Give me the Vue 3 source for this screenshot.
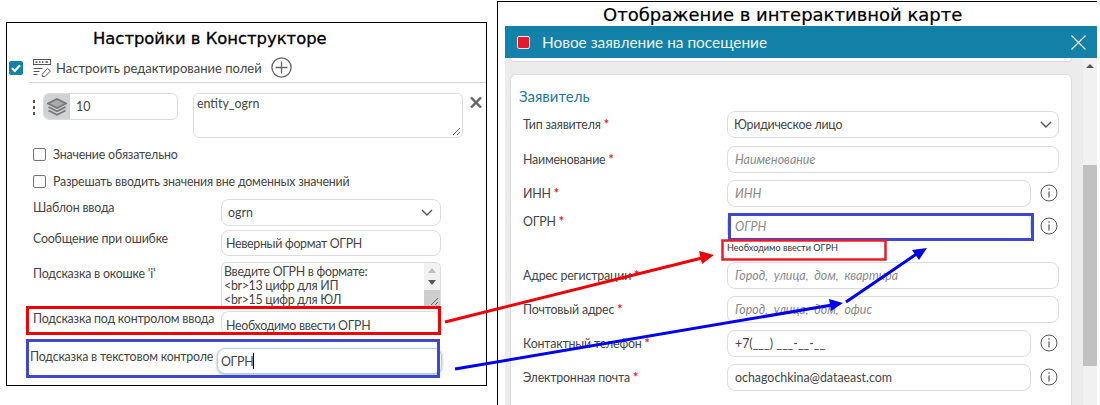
<script setup>
const rightRows = [
  { label: 'Адрес регистрации', ph: 'Город,  улица,  дом,  квартира', cls: 'r-a' },
  { label: 'Почтовый адрес', ph: 'Город,  улица,  дом,  офис', cls: 'r-b' },
]
</script>

<template>
  <div class="page">
    <section class="left">
      <h2 class="left-title">Настройки в Конструкторе</h2>
      <div class="tool-row">
        <span class="big-check">
          <svg width="14" height="14" viewBox="0 0 14 14"><path d="M3 7.2 5.8 10 11 4.2" fill="none" stroke="#fff" stroke-width="2.2" /></svg>
        </span>
        <div class="tool-inner">
          <svg class="tool-icon" width="19" height="18" viewBox="0 0 19 18" fill="none" stroke="#555" stroke-width="1">
            <rect x="0.5" y="0.5" width="17" height="5" />
            <path d="M2.5 3h2M6 3h1.5M9 3h1.5M12.5 3h2.5" stroke-width="1.3" />
            <path d="M0.5 9.5h9M0.5 12.5h6M0.5 15.5h4" />
            <path d="M9 15.5 14.5 9.5 17.5 12 12 17.5H9.5Z" />
          </svg>
          <span class="tool-text">Настроить редактирование полей</span>
          <svg class="plus" width="21" height="21" viewBox="0 0 21 21" fill="none" stroke="#666" stroke-width="1.3">
            <circle cx="10.5" cy="10.5" r="9.6" />
            <path d="M10.5 4.5v12M4.5 10.5h12" />
          </svg>
        </div>
      </div>

      <div class="field-row">
        <span class="dots"><i></i><i></i><i></i></span>
        <div class="num-group">
          <span class="addon">
            <svg width="20" height="18" viewBox="0 0 20 18" fill="none" stroke="#777" stroke-width="1.8">
              <path d="M10 1 19 5.5 10 10 1 5.5Z" fill="#aaa" />
              <path d="M1.5 9 10 13.2 18.5 9" />
              <path d="M1.5 12.5 10 16.7 18.5 12.5" />
            </svg>
          </span>
          <span class="num-val">10</span>
        </div>
        <div class="area-name">
          entity_ogrn
          <svg class="grip" width="9" height="9" viewBox="0 0 9 9" stroke="#666" stroke-width="1"><path d="M1 8 8 1M5 8 8 5" /></svg>
        </div>
        <svg class="close-x" width="12" height="11" viewBox="0 0 12 11" stroke="#666" stroke-width="2.4"><path d="M1 0.5 11 10.5M11 0.5 1 10.5" /></svg>
      </div>

      <label class="check-row first"><span class="box"></span>Значение обязательно</label>
      <label class="check-row"><span class="box"></span>Разрешать вводить значения вне доменных значений</label>

      <div class="l-row l-select">
        <span class="l-label">Шаблон ввода</span>
        <div class="l-ctl sel latin">ogrn
          <svg width="12" height="7" viewBox="0 0 12 7" fill="none" stroke="#555" stroke-width="1.4"><path d="M1 1 6 6 11 1" /></svg>
        </div>
      </div>
      <div class="l-row l-msg">
        <span class="l-label">Сообщение при ошибке</span>
        <div class="l-ctl">Неверный формат ОГРН</div>
      </div>
      <div class="l-row l-tip">
        <span class="l-label tip-label">Подсказка в окошке 'i'</span>
        <div class="tip-area">
          <div class="tip-text">Введите ОГРН в формате:<br />&lt;br&gt;13 цифр для ИП<br />&lt;br&gt;15 цифр для ЮЛ</div>
          <div class="tip-scroll">
            <span class="arr-up"></span>
            <span class="arr-down"></span>
            <span class="tip-track">
              <svg width="9" height="9" viewBox="0 0 9 9" stroke="#666" stroke-width="1"><path d="M1 8 8 1M5 8 8 5" /></svg>
            </span>
          </div>
        </div>
      </div>
      <div class="l-row l-under">
        <span class="l-label under-label">Подсказка под контролом ввода</span>
        <div class="l-ctl under-ctl">Необходимо ввести ОГРН</div>
      </div>
      <div class="l-row l-text">
        <span class="l-label">Подсказка в текстовом контроле</span>
        <div class="l-ctl focus-ctl">ОГРН<span class="caret"></span></div>
      </div>
    </section>

    <section class="right">
      <h2 class="right-title">Отображение в интерактивной карте</h2>
      <header class="win-head">
        <span class="win-mark"></span>
        <span class="win-title">Новое заявление на посещение</span>
        <svg class="win-close" width="15" height="15" viewBox="0 0 15 15" stroke="#eef8fb" stroke-width="1.2"><path d="M0.5 0.5 14.5 14.5M14.5 0.5 0.5 14.5" /></svg>
      </header>
      <div class="win-body">
        <div class="win-scroll">
          <div class="prev-card"></div>
          <div class="card">
            <h3 class="card-title">Заявитель</h3>

            <div class="r-row r-type">
              <span class="r-label">Тип заявителя <b>*</b></span>
              <div class="r-ctl r-sel">Юридическое лицо
                <svg width="12" height="7" viewBox="0 0 12 7" fill="none" stroke="#555" stroke-width="1.4"><path d="M1 1 6 6 11 1" /></svg>
              </div>
            </div>
            <div class="r-row r-name">
              <span class="r-label">Наименование <b>*</b></span>
              <div class="r-ctl ph">Наименование</div>
            </div>
            <div class="r-row r-inn">
              <span class="r-label">ИНН <b>*</b></span>
              <div class="r-ctl ph short">ИНН</div>
              <svg class="info" width="18" height="18" viewBox="0 0 18 18" fill="none" stroke="#555" stroke-width="1"><circle cx="9" cy="9" r="8" /><path d="M9 7.5v6M9 4.2v1.6" stroke-width="1.2" /></svg>
            </div>
            <div class="r-row r-ogrn">
              <span class="r-label">ОГРН <b>*</b></span>
              <div class="r-ctl ph short">ОГРН</div>
              <svg class="info" width="18" height="18" viewBox="0 0 18 18" fill="none" stroke="#555" stroke-width="1"><circle cx="9" cy="9" r="8" /><path d="M9 7.5v6M9 4.2v1.6" stroke-width="1.2" /></svg>
              <span class="r-hint">Необходимо ввести ОГРН</span>
            </div>
            <div v-for="r in rightRows" :key="r.label" class="r-row" :class="r.cls">
              <span class="r-label">{{ r.label }} <b>*</b></span>
              <div class="r-ctl ph">{{ r.ph }}</div>
            </div>
            <div class="r-row r-tel">
              <span class="r-label">Контактный телефон <b>*</b></span>
              <div class="r-ctl short latin">+7(___) ___-__-__</div>
              <svg class="info" width="18" height="18" viewBox="0 0 18 18" fill="none" stroke="#555" stroke-width="1"><circle cx="9" cy="9" r="8" /><path d="M9 7.5v6M9 4.2v1.6" stroke-width="1.2" /></svg>
            </div>
            <div class="r-row r-mail">
              <span class="r-label">Электронная почта <b>*</b></span>
              <div class="r-ctl short latin">ochagochkina@dataeast.com</div>
              <svg class="info" width="18" height="18" viewBox="0 0 18 18" fill="none" stroke="#555" stroke-width="1"><circle cx="9" cy="9" r="8" /><path d="M9 7.5v6M9 4.2v1.6" stroke-width="1.2" /></svg>
            </div>
          </div>
        </div>
        <div class="scrollbar">
          <span class="sb-up"></span>
          <span class="sb-thumb"></span>
        </div>
      </div>
    </section>

    <!-- annotation layer drawn over both screenshots -->
    <svg class="notes" width="1100" height="405" viewBox="0 0 1100 405" fill="none">
      <rect x="27.5" y="307.5" width="412" height="26" stroke="#f00000" stroke-width="3" />
      <rect x="27.5" y="340.5" width="411" height="36" stroke="#3f48cc" stroke-width="3" />
      <rect x="729.5" y="214.5" width="303" height="25" stroke="#3f48cc" stroke-width="3" />
      <rect x="722.5" y="240.5" width="163" height="19" stroke="#ed1c24" stroke-width="2.5" />
      <path d="M445 322 702 258" stroke="#f00000" stroke-width="3" />
      <path d="M714 255 699 251 702 264Z" fill="#f00000" />
      <path d="M455 369 832 305" stroke="#0000f0" stroke-width="3" />
      <path d="M843 303 829 299 831 311Z" fill="#0000f0" />
      <path d="M846 302 918 253" stroke="#0000f0" stroke-width="3" />
      <path d="M927 248 912 250 919 260Z" fill="#0000f0" />
    </svg>
  </div>
</template>

<style scoped>
.page {
  position: relative;
  display: flex;
  width: 1100px;
  height: 405px;
  overflow: hidden;
  background: #fff;
  font-family: Lato, Roboto, "Noto Sans", sans-serif;
  font-size: 12.4px;
  letter-spacing: -0.2px;
  color: #454545;
}
.left {
  box-sizing: border-box;
  width: 481px;
  height: 364px;
  margin: 22px 0 0 6px;
  border: 1px solid #000;
  flex: none;
}
.left-title {
  margin: 0;
  padding-left: 86px;
  height: 32px;
  font: 400 16.4px/32px "DejaVu Sans", sans-serif;
  letter-spacing: 0;
  -webkit-text-stroke: 0.3px #000;
  color: #000;
}
.tool-row {
  display: flex;
  height: 28px;
  padding-left: 2px;
}
.big-check {
  flex: none;
  width: 14px;
  height: 14px;
  margin-top: 6px;
  background: #1481a8;
  border-radius: 2px;
}
.big-check svg { display: block; }
.tool-inner {
  flex: 1;
  display: flex;
  align-items: center;
  margin-left: 7px;
  padding: 0 0 2px 3px;
  border-bottom: 1px solid #d4d4d4;
}
.tool-icon { flex: none; }
.tool-text { margin-left: 4px; font-size: 13px; letter-spacing: 0; }
.plus { margin-left: 9px; }
.field-row {
  position: relative;
  display: flex;
  align-items: flex-start;
  margin-top: 10px;
  padding-left: 26px;
  letter-spacing: 0;
}
.dots {
  display: flex;
  flex-direction: column;
  gap: 3px;
  width: 10px;
  padding-top: 7px;
}
.dots i {
  width: 2px;
  height: 3px;
  background: #555;
}
.num-group {
  display: flex;
  align-items: center;
  box-sizing: border-box;
  width: 135px;
  height: 27px;
  border: 1px solid #ddd;
  border-radius: 6px;
  overflow: hidden;
}
.addon {
  display: flex;
  align-items: center;
  justify-content: center;
  width: 26px;
  height: 100%;
  background: #cfd1d3;
}
.num-val { margin-left: 6px; }
.area-name {
  position: relative;
  box-sizing: border-box;
  width: 270px;
  height: 45px;
  margin-left: 15px;
  padding: 2px 3px;
  border: 1px solid #ddd;
  border-radius: 6px;
}
.grip {
  position: absolute;
  right: 1px;
  bottom: 1px;
}
.close-x { margin: 4px 0 0 7px; }
.check-row {
  display: flex;
  align-items: center;
  height: 14px;
  margin-top: 13px;
  padding-left: 26px;
}
.check-row.first { margin-top: 9px; }
.box {
  flex: none;
  box-sizing: border-box;
  width: 13px;
  height: 13px;
  margin-right: 7px;
  border: 1px solid #777;
  border-radius: 2px;
}
.l-row {
  display: grid;
  grid-template-columns: 188px 220px;
  padding-left: 26px;
}
.l-select { margin-top: 11px; }
.l-msg { margin-top: 4px; }
.l-tip { margin-top: 6px; }
.l-under { margin-top: 5px; }
.l-text {
  margin-top: 13px;
  grid-template-columns: 187px 225px;
  padding-left: 23px;
}
.l-label {
  line-height: 18px;
  white-space: nowrap;
}
.tip-label { padding-top: 3px; }
.under-label { margin-top: -1px; }
.l-ctl {
  display: flex;
  align-items: center;
  box-sizing: border-box;
  height: 26px;
  padding-left: 4px;
  border: 1px solid #ddd;
  border-radius: 8px;
  background: #fff;
  letter-spacing: -0.3px;
}
.sel {
  height: 27px;
  justify-content: space-between;
  padding: 0 7px 0 6px;
}
.under-ctl {
  height: 24px;
  border-bottom: 0;
  padding-top: 3px;
}
.focus-ctl {
  padding-left: 3px;
  border-color: #b9cfd8;
  box-shadow: 0 1px 3px rgba(20, 110, 140, 0.45);
}
.caret {
  display: inline-block;
  width: 1px;
  height: 16px;
  background: #000;
}
.tip-area {
  display: flex;
  height: 44px;
  overflow: hidden;
  border: 1px solid #ddd;
  border-bottom: 0;
  border-radius: 6px 6px 0 0;
  box-sizing: border-box;
}
.tip-text {
  flex: 1;
  padding: 2px 2px;
  line-height: 14px;
  letter-spacing: -0.3px;
  white-space: nowrap;
}
.tip-scroll {
  position: relative;
  display: flex;
  flex-direction: column;
  align-items: center;
  width: 16px;
  background: #f1f1f1;
}
.arr-up {
  width: 0;
  height: 0;
  margin-top: 5px;
  border: 4px solid transparent;
  border-top: 0;
  border-bottom: 5px solid #bbb;
}
.arr-down {
  width: 0;
  height: 0;
  margin-top: 7px;
  border: 4px solid transparent;
  border-bottom: 0;
  border-top: 5px solid #555;
}
.tip-track {
  position: absolute;
  inset: 27px 0 0 0;
  background: #cdcdcd;
}
.tip-track svg {
  position: absolute;
  right: 1px;
  bottom: 0;
}
.right {
  display: flex;
  flex-direction: column;
  box-sizing: border-box;
  width: 600px;
  height: 405px;
  margin: 1px 0 0 10px;
  border-left: 1px solid #000;
  border-top: 1px solid #000;
  flex: none;
}
.right-title {
  margin: 0;
  padding-left: 105px;
  height: 24px;
  font: 400 18px/25px "DejaVu Sans", sans-serif;
  letter-spacing: 0;
  -webkit-text-stroke: 0.2px #000;
  color: #000;
}
.win-head {
  display: flex;
  align-items: center;
  height: 32px;
  margin-left: 7px;
  background: #1481a8;
  color: #eaf5f8;
  flex: none;
}
.win-mark {
  box-sizing: border-box;
  width: 13px;
  height: 13px;
  margin-left: 12px;
  background: #e8182c;
  border: 1.5px solid #e0e6ea;
  border-radius: 2px;
}
.win-title {
  margin-left: 12px;
  font-size: 15.4px;
  letter-spacing: 0;
}
.win-close { margin-left: auto; margin-right: 11px; }
.win-body {
  flex: 1;
  display: flex;
  margin-left: 7px;
  min-height: 0;
  overflow: hidden;
  background: #ececec;
}
.win-scroll {
  flex: 1;
  min-width: 0;
  padding: 0 11px 0 5px;
}
.prev-card {
  height: 3px;
  background: #fff;
  border: 1px solid #ddd;
  border-top: 0;
  border-radius: 0 0 6px 6px;
}
.card {
  box-sizing: border-box;
  height: 360px;
  margin-top: 12px;
  padding: 12px 12px 0 8px;
  background: #fff;
  border: 1px solid #ddd;
  border-radius: 6px;
}
.card-title {
  margin: 0;
  height: 24px;
  font: 400 15px/18px Lato, Roboto, sans-serif;
  letter-spacing: 0;
  color: #1d7a9c;
}
.r-row {
  position: relative;
  display: flex;
  align-items: flex-start;
  height: 27px;
  padding-left: 4px;
}
.r-label {
  flex: none;
  width: 204px;
  padding-top: 5px;
  line-height: 18px;
  white-space: nowrap;
}
.r-label b { color: #e8182c; font-weight: 700; }
.r-ctl {
  display: flex;
  align-items: center;
  box-sizing: border-box;
  width: 332px;
  height: 27px;
  padding-left: 7px;
  border: 1px solid #ddd;
  border-radius: 8px;
  white-space: pre;
}
.r-ctl.short { width: 304px; }
.r-sel {
  justify-content: space-between;
  padding: 0 6px;
  letter-spacing: -0.25px;
}
.ph { color: #8a8a8a; font-style: italic; letter-spacing: 0; }
.latin { letter-spacing: 0; }
.info { margin: 4px 0 0 9px; flex: none; }
.r-name { margin-top: 8px; }
.r-inn { margin-top: 7px; }
.r-ogrn { margin-top: 6px; margin-bottom: 22px; }
.r-ogrn .r-label { padding-top: 0; }
.r-ogrn .r-hint {
  position: absolute;
  left: 208px;
  top: 29px;
  font-size: 9.1px;
  letter-spacing: 0;
  color: #333;
}
.r-b, .r-tel, .r-mail { margin-top: 7px; }
.notes {
  position: absolute;
  left: 0;
  top: 0;
  pointer-events: none;
}
.scrollbar {
  position: relative;
  flex: none;
  width: 14px;
  background: #f1f1f1;
}
.sb-up {
  position: absolute;
  left: 3px;
  top: 6px;
  border: 4px solid transparent;
  border-top: 0;
  border-bottom: 4px solid #555;
}
.sb-thumb {
  position: absolute;
  left: 0;
  right: 0;
  top: 107px;
  height: 201px;
  background: #c1c1c1;
}
</style>
